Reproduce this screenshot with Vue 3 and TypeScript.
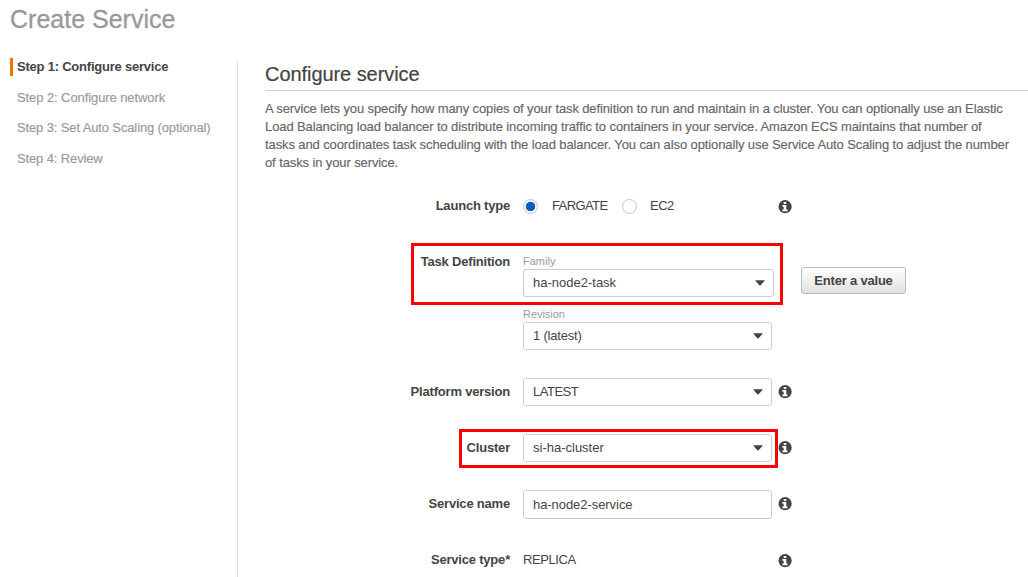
<script setup lang="ts">
import { defineComponent, h, ref } from 'vue'

const steps: { label: string; cls: string }[] = [
  { label: 'Step 1: Configure service', cls: 'active' },
  { label: 'Step 2: Configure network', cls: 'network' },
  { label: 'Step 3: Set Auto Scaling (optional)', cls: '' },
  { label: 'Step 4: Review', cls: '' },
]

const intro: string[] = [
  'A service lets you specify how many copies of your task definition to run and maintain in a cluster. You can optionally use an Elastic',
  'Load Balancing load balancer to distribute incoming traffic to containers in your service. Amazon ECS maintains that number of',
  'tasks and coordinates task scheduling with the load balancer. You can also optionally use Service Auto Scaling to adjust the number',
  'of tasks in your service.',
]

const launchType = ref<'FARGATE' | 'EC2'>('FARGATE')
const serviceName = ref('ha-node2-service')

const InfoIcon = defineComponent(() => () =>
  h('svg', { width: 14, height: 14, viewBox: '0 0 14 14' }, [
    h('circle', { cx: 7.1, cy: 6.7, r: 6.6, fill: '#444' }),
    h('path', { d: 'M5.7 1.9h2.6v2H5.7zM4.4 5h3.9v4.6h1.3v1.7H4.4V9.6h1.3V6.7H4.4z', fill: '#fff' }),
  ]),
)

const Caret = defineComponent(() => () =>
  h('svg', { width: 10, height: 6, viewBox: '0 0 10 6' }, [
    h('path', { d: 'M.5.3h9Q9.8.3 9.4.9L5.6 5.3Q5 5.9 4.4 5.3L.6.9Q.2.3.5.3z', fill: '#444' }),
  ]),
)
</script>

<template>
  <div class="page">
    <h1>Create Service</h1>
    <div class="columns">
      <nav class="steps">
        <div v-for="s in steps" :key="s.label" class="step" :class="s.cls"><span>{{ s.label }}</span></div>
      </nav>
      <main class="main">
        <h2>Configure service</h2>
        <p class="intro">
          <span v-for="(line, i) in intro" :key="i" class="line" :class="'l' + i">{{ line }}</span>
        </p>
        <form class="form" @submit.prevent>
          <div class="row">
            <span class="label">Launch type</span>
            <div class="control radios">
              <span class="radio" :class="{ on: launchType === 'FARGATE' }" @click="launchType = 'FARGATE'"></span>
              <span class="fargate caps">FARGATE</span>
              <span class="radio" :class="{ on: launchType === 'EC2' }" @click="launchType = 'EC2'"></span>
              <span class="ec2 caps">EC2</span>
            </div>
            <InfoIcon class="info low" />
          </div>
          <div class="row task">
            <span class="label">Task Definition</span>
            <div class="control">
              <div class="hint first">Family</div>
              <div class="select wide"><span>ha-node2-task</span><Caret /></div>
              <div class="hint second">Revision</div>
              <div class="select"><span class="revision">1 (latest)</span><Caret /></div>
            </div>
            <button class="button" type="button">Enter a value</button>
            <div class="mark mark-task"></div>
          </div>
          <div class="row">
            <span class="label">Platform version</span>
            <div class="select"><span class="caps">LATEST</span><Caret /></div>
            <InfoIcon class="info" />
          </div>
          <div class="row">
            <span class="label">Cluster</span>
            <div class="select"><span>si-ha-cluster</span><Caret /></div>
            <InfoIcon class="info" />
            <div class="mark mark-cluster"></div>
          </div>
          <div class="row">
            <span class="label">Service name</span>
            <input v-model="serviceName" class="input" type="text" />
            <InfoIcon class="info" />
          </div>
          <div class="row">
            <span class="label">Service type*</span>
            <span class="plain caps">REPLICA</span>
            <InfoIcon class="info low" />
          </div>
        </form>
      </main>
    </div>
  </div>
</template>

<style>
html, body { background: #fff; overflow: hidden; }
</style>

<style scoped>
.page {
  width: 1028px;
  height: 577px;
  overflow: hidden;
  color: #444;
  font: 13px/18px "Liberation Sans", Arial, sans-serif;
  box-sizing: border-box;
}
h1 {
  box-sizing: border-box;
  margin: 0;
  padding: 5px 0 0 10px;
  height: 56px;
  font-size: 25px;
  line-height: 28px;
  font-weight: 400;
  color: #999;
  -webkit-text-stroke: 0.3px #999;
}
.columns { display: flex; box-sizing: border-box; height: 521px; }
.steps { width: 237px; padding: 2px 0 0 10px; box-sizing: border-box; }
.step {
  height: 18px;
  margin-bottom: 12.6px;
  padding-left: 7px;
  color: #999;
  white-space: nowrap;
  letter-spacing: -0.13px;
  -webkit-text-stroke: 0.15px #999;
}
.step.network { letter-spacing: -0.09px; }
.step.active {
  padding-left: 4px;
  border-left: 3px solid #ef7300;
  color: #444;
  font-weight: 700;
  letter-spacing: -0.22px;
  -webkit-text-stroke: 0;
}
.main {
  flex: 1;
  margin-top: 5px;
  padding-left: 27px;
  border-left: 1px solid #ddd;
}
h2 {
  margin: 0;
  height: 29px;
  border-bottom: 1px solid #ccc;
  font-size: 20px;
  line-height: 26px;
  font-weight: 400;
  letter-spacing: -0.06px;
  -webkit-text-stroke: 0.2px #444;
}
.intro { margin: 9px 0 0; color: #666; letter-spacing: -0.108px; -webkit-text-stroke: 0.15px #666; }
.line { display: block; height: 18px; white-space: nowrap; }
.line.l0 { letter-spacing: -0.115px; }
.line.l1 { letter-spacing: -0.103px; }
.form { display: flex; flex-direction: column; gap: 28px; margin-top: 20px; }
.row {
  position: relative;
  display: flex;
  align-items: flex-start;
  height: 28px;
  line-height: 28px;
  white-space: nowrap;
}
.row.task { height: 102px; }
.label { width: 245px; margin-right: 13px; text-align: right; font-weight: 700; letter-spacing: -0.2px; }
.control { width: 249px; }
.caps { letter-spacing: -0.5px; }
.revision { letter-spacing: -0.2px; }
.radios { display: flex; align-items: center; height: 28px; }
.radio {
  box-sizing: border-box;
  width: 15px;
  height: 15px;
  border: 1px solid #c4c4c4;
  border-radius: 50%;
  background: #fff;
}
.radio.on { background: radial-gradient(circle, #0a5fc0 4.4px, #fff 5.1px) border-box no-repeat; }
.fargate { width: 56px; margin: 0 14px; letter-spacing: -0.6px; }
.ec2 { margin-left: 13px; }
.info { flex: none; margin: 7px 0 0 6px; }
.info.low { margin-top: 8px; }
.hint { color: #999; font-size: 11px; line-height: 15px; height: 15px; }
.hint.first { padding-top: 6px; }
.hint.second { padding-top: 10px; letter-spacing: -0.05px; }
.select, .input {
  box-sizing: border-box;
  width: 249px;
  height: 28px;
  padding: 0 9px;
  border: 1px solid #ccc;
  border-radius: 3px;
  background: #fff;
}
.select { display: flex; align-items: center; justify-content: space-between; padding-right: 8px; line-height: 26px; }
.select.wide { width: 251px; }
.input { height: 29px; margin: 0; color: inherit; font: inherit; line-height: 27px; letter-spacing: -0.06px; outline: 0; }
.plain { width: 249px; }
.plain.caps { letter-spacing: -0.43px; }
.button {
  box-sizing: border-box;
  width: 105px;
  height: 27px;
  margin: 19px 0 0 29px;
  padding: 0;
  border: 1px solid #bbb;
  border-radius: 3px;
  background: linear-gradient(#fff, #e0e0e0);
  color: #444;
  font: 700 13px/25px "Liberation Sans", Arial, sans-serif;
  letter-spacing: -0.2px;
}
.mark { position: absolute; box-sizing: border-box; border: 3px solid #f00; pointer-events: none; }
.mark-task { left: 146px; top: -5px; width: 372px; height: 62px; }
.mark-cluster { left: 194px; top: -5px; width: 319px; height: 39px; }
</style>
